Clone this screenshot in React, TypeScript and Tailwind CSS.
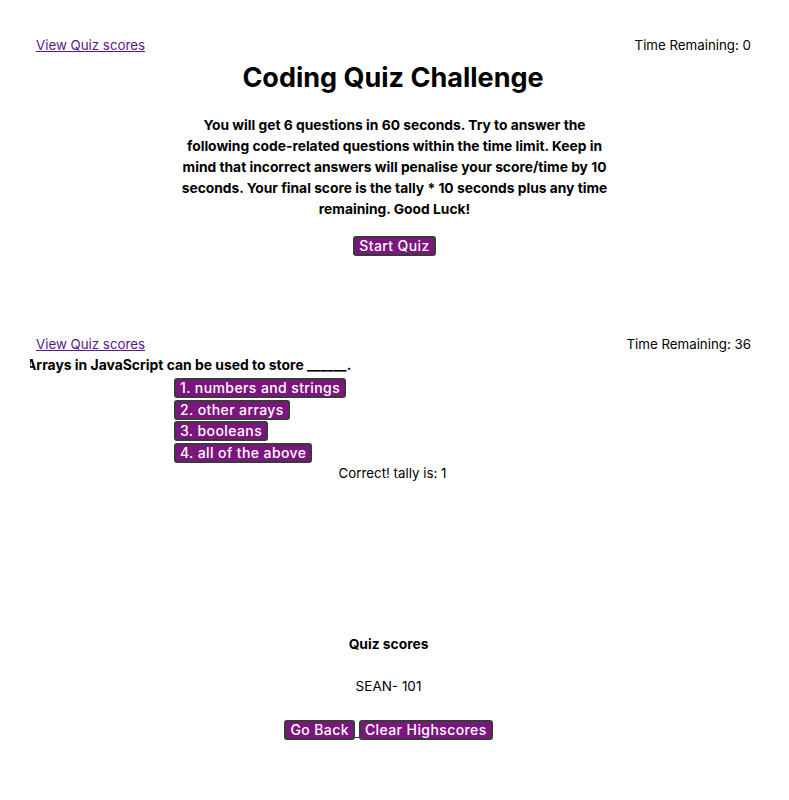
import React from "react";

const btn =
  "bg-[#7d157f] text-white text-[14px] font-medium leading-[16px] px-[4px] py-0 border-2 border-[#3a3a3a] rounded-[3px] tracking-[0.4px]";

function TopRow({ time }: { time: string }) {
  return (
    <div className="flex justify-between items-center h-[20px] px-[36px] text-[13.3px]">
      <a href="#" className="text-[#551a8b] underline">View Quiz scores</a>
      <span className="text-black pr-[2px]">Time Remaining: {time}</span>
    </div>
  );
}

export default function App() {
  return (
    <div className="w-[789px] h-[800px] bg-white text-black font-['Inter','Noto_Sans',sans-serif]">
      {/* Section 1 */}
      <div className="pt-[36px]">
        <TopRow time="0" />
        <h1 className="text-center text-[27px] font-bold leading-[34px] mt-[5px] pr-[3px]">Coding Quiz Challenge</h1>
        <p className="mx-auto w-[436px] text-center text-[13.8px] font-bold leading-[21px] mt-[20px]">
          You will get 6 questions in 60 seconds. Try to answer the following code-related questions within the time limit. Keep in mind that incorrect answers will penalise your score/time by 10 seconds. Your final score is the tally * 10 seconds plus any time remaining. Good Luck!
        </p>
        <div className="flex justify-center mt-[16px]">
          <button className={btn}>Start Quiz</button>
        </div>
      </div>

      {/* Section 2 */}
      <div className="mt-[79px]">
        <TopRow time="36" />
        <div className="ml-[30px] overflow-hidden">
          <div className="-ml-[4px] text-[13.9px] font-bold leading-[20px] whitespace-nowrap">
            Arrays in JavaScript can be used to store ______.
          </div>
        </div>
        <div className="flex flex-col items-start pl-[174px] gap-[1.5px] mt-[3px]">
          <button className={btn}>1. numbers and strings</button>
          <button className={btn}>2. other arrays</button>
          <button className={btn}>3. booleans</button>
          <button className={btn}>4. all of the above</button>
        </div>
        <div className="text-center text-[13.3px] leading-[20px] mt-[0px] pr-[4px]">Correct! tally is: 1</div>
      </div>

      {/* Section 3 */}
      <div className="mt-[151px] flex flex-col items-center pr-[12px]">
        <div className="text-[13.8px] font-bold leading-[20px]">Quiz scores</div>
        <div className="text-[13.5px] leading-[20px] mt-[22px]">SEAN- 101</div>
        <div className="flex mt-[24px]">
          <button className={btn}>Go Back</button>
          <div className="w-[4px] h-[1px] bg-[#551a8b] self-end mb-[2px]" />
          <button className={btn}>Clear Highscores</button>
        </div>
      </div>
    </div>
  );
}
